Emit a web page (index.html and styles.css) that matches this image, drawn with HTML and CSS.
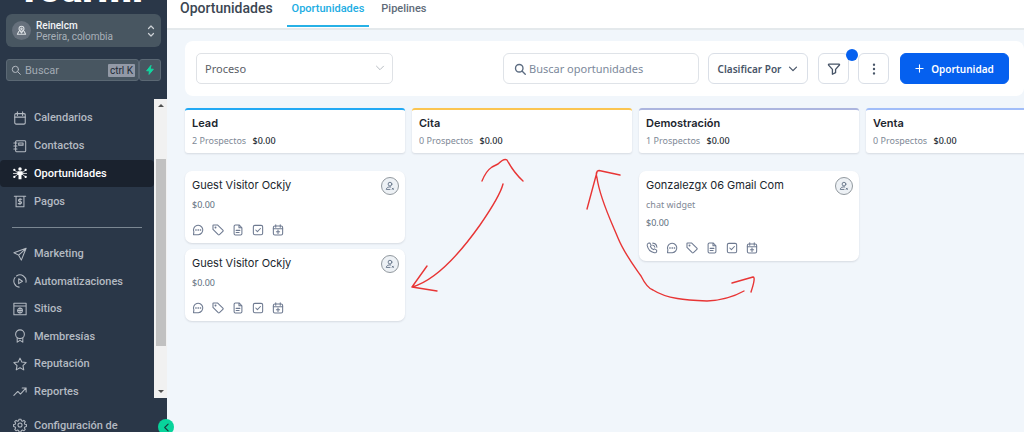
FILE: index.html
```html
<!DOCTYPE html>
<html lang="es">
<head>
<meta charset="utf-8">
<title>Oportunidades</title>
<link rel="stylesheet" href="styles.css">
</head>
<body>
<svg class="sprite" aria-hidden="true">
  <symbol id="i-pin" viewBox="0 0 16 16"><circle cx="8" cy="5.5" r="3.6"/><circle cx="8" cy="5.5" r="1"/><path d="M5.5 8.2 8 11.5l2.500-3.300M4 9.500 2 13.500h12l-2-4"/></symbol>
  <symbol id="i-search" viewBox="0 0 16 16"><circle cx="7" cy="7" r="5"/><path d="m11 11 4 4"/></symbol>
  <symbol id="i-updown" viewBox="0 0 8 14"><path d="m1.500 4.500 2.500-2.500 2.500 2.500M1.500 9.500 4 12l2.500-2.500"/></symbol>
  <symbol id="i-bolt" viewBox="0 0 10 12"><path d="M6 .5.8 7h3.400L3.800 11.500 9.200 5H5.700z"/></symbol>
  <symbol id="i-calendar" viewBox="0 0 16 16"><rect x="2" y="3" width="12" height="12" rx="1.500"/><path d="M2 7h12M5 1v4M11 1v4"/></symbol>
  <symbol id="i-contacts" viewBox="0 0 16 16"><rect x="3" y="2" width="11.500" height="12.500" rx="1"/><rect x="6.500" y="4.500" width="5" height="2.500"/><path d="M1 4.500h3.500M1 8h3.500M1 11.500h3.500"/></symbol>
  <symbol id="i-opps" viewBox="0 0 16 16"><g fill="currentColor" stroke="none"><circle cx="8" cy="3.300" r="2"/><path d="M5 6h6v3.500l-1.300 1V15H6.300v-4.500L5 9.500z"/><circle cx="1.500" cy="4.500" r="1.300"/><circle cx="14.500" cy="4.500" r="1.300"/><circle cx="1.500" cy="12.500" r="1.300"/><circle cx="14.500" cy="12.500" r="1.300"/></g><path d="M1.500 4.500 5 7.500M14.500 4.500 11 7.500M.5 8.500H5M11 8.500h4.500M1.500 12.500 5.500 9.500M14.500 12.500 10.500 9.500" stroke-width=".9"/></symbol>
  <symbol id="i-pay" viewBox="0 0 16 16"><path d="M1.500 2.500h13M3.500 2.500v12h9v-12M10 6H7.500C5.800 6 5.800 8.500 7.500 8.500h1c1.700 0 1.700 2.500 0 2.500H6M8 5v7"/></symbol>
  <symbol id="i-send" viewBox="0 0 16 16"><path d="M15 1.500 1 6.500l5.500 2.800L9.500 15zM15 1.500 6.500 9.300"/></symbol>
  <symbol id="i-auto" viewBox="0 0 16 16"><path d="M14.800 9.500A7 7 0 0 0 4 2.300M2.300 4A7 7 0 0 0 7 15M6.500 5.500v5.500l4.300-2.750z"/></symbol>
  <symbol id="i-site" viewBox="0 0 16 16"><path d="M1 1.500h14v13H1zM1 4.500h14"/><circle cx="8" cy="9.700" r="2.700"/><path d="M5.500 9.700h5M8 7v5.400"/></symbol>
  <symbol id="i-award" viewBox="0 0 16 16"><circle cx="8" cy="6" r="5"/><path d="M4.800 10v5l3.200-2 3.200 2v-5"/></symbol>
  <symbol id="i-star" viewBox="0 0 16 16"><path d="m8 1.300 2.100 4.500 4.900.6-3.600 3.400.9 4.900L8 12.300l-4.300 2.400.9-4.900L1 6.400l4.900-.6z"/></symbol>
  <symbol id="i-trend" viewBox="0 0 16 16"><path d="m1 13 4.500-4.500 3 3L15 4.500M10.500 4.500H15V9"/></symbol>
  <symbol id="i-gear" viewBox="0 0 24 24"><circle cx="12" cy="12" r="3.500"/><path d="M10.300 2h3.400l.6 2.700 1.900.8 2.400-1.500 2.400 2.400-1.500 2.400.8 1.900 2.700.6v3.400l-2.700.6-.8 1.900 1.500 2.400-2.400 2.400-2.400-1.500-1.900.8-.6 2.700h-3.400l-.6-2.700-1.900-.8L5.400 22 3 19.600l1.500-2.400-.8-1.900L1 14.700v-3.400l2.700-.6.8-1.900L3 6.400 5.400 4l2.400 1.500 1.900-.8z"/></symbol>
  <symbol id="i-down" viewBox="0 0 10 10"><path d="m1.500 3.200 3.500 3.500 3.500-3.500"/></symbol>
  <symbol id="i-left" viewBox="0 0 10 10"><path d="M6.800 1.200 3 5l3.800 3.800"/></symbol>
  <symbol id="i-filter" viewBox="0 0 16 16"><path d="M2.200 2.500h11.600a.6.600 0 0 1 .4 1L9.800 8.500v3.700l-3.600 1.800V8.500L1.800 3.500a.6.600 0 0 1 .4-1z"/></symbol>
  <symbol id="i-dots" viewBox="0 0 16 16"><g fill="currentColor"><circle cx="8" cy="3" r=".6"/><circle cx="8" cy="8" r=".6"/><circle cx="8" cy="13" r=".6"/></g></symbol>
  <symbol id="i-plus" viewBox="0 0 10 10"><path d="M5 1v8M1 5h8"/></symbol>
  <symbol id="i-user" viewBox="0 0 16 16"><circle cx="8" cy="5" r="3"/><path d="M9 9.500c-4-.4-6.500.8-7 4h6"/><path d="m11.500 11.500 2 2m0-2-2 2"/></symbol>
  <symbol id="i-call" viewBox="0 0 16 16"><path d="M5.800 6c.9 1.800 2.300 3.300 4.200 4.200l1.200-1 3 1.600v2c-.5 1.500-1.700 1.800-3 1.500C6 13.400 2.500 9.500 1.600 4.500c-.2-1.500.3-2.500 1.800-3h2l1.500 3zM9 1.500A6 6 0 0 1 14.500 7M9 4.200A3.200 3.200 0 0 1 11.800 7"/></symbol>
  <symbol id="i-chat" viewBox="0 0 16 16"><path d="M2 14.200h6.500A6.200 6.200 0 1 0 2.500 10.500L2 14.200z"/><path d="M5 8h.6M8 8h.6M11 8h.6" stroke-width="1.700"/></symbol>
  <symbol id="i-tag" viewBox="0 0 16 16"><path d="M1.300 2v5.200l7 7.100q.8.700 1.600 0l4.600-4.600q.8-.8 0-1.600L7.300 1.300H2q-.7 0-.7.700z"/><circle cx="4.700" cy="4.700" r=".6"/></symbol>
  <symbol id="i-doc" viewBox="0 0 16 16"><path d="M9.500 1.300h-5q-1.700 0-1.700 1.700v10q0 1.700 1.700 1.700h7q1.700 0 1.700-1.700V5zM9.300 1.500V5H13M5.500 8.500h5M5.500 11.300h4"/></symbol>
  <symbol id="i-check" viewBox="0 0 16 16"><rect x="1.800" y="1.800" width="12.400" height="12.400" rx="2"/><path d="m5 8 2.200 2.200L11.200 6"/></symbol>
  <symbol id="i-event" viewBox="0 0 16 16"><rect x="1.800" y="2.700" width="12.400" height="12" rx="2"/><path d="M1.800 6.200h12.400M5 1v3.200M11 1v3.200M8 8v4.500M5.800 10.200h4.400"/></symbol>
</svg>

<div class="app">
  <aside class="sidebar">
    <div class="logo">roarmi</div>
    <button class="account" type="button">
      <span class="account-pin"><svg class="icon"><use href="#i-pin"/></svg></span>
      <span class="account-text"><strong>Reinelcm</strong><span>Pereira, colombia</span></span>
      <svg class="icon updown"><use href="#i-updown"/></svg>
    </button>
    <div class="quick">
      <label class="quick-search">
        <svg class="icon"><use href="#i-search"/></svg>
        <input type="text" placeholder="Buscar" aria-label="Buscar">
        <kbd>ctrl K</kbd>
      </label>
      <button class="quick-bolt" type="button" aria-label="Acciones rápidas"><svg class="icon"><use href="#i-bolt"/></svg></button>
    </div>
    <div class="nav-area">
      <nav class="nav">
        <div class="nav-group">
          <a href="#"><svg class="icon"><use href="#i-calendar"/></svg>Calendarios</a>
          <a href="#"><svg class="icon"><use href="#i-contacts"/></svg>Contactos</a>
          <a href="#" class="active"><svg class="icon"><use href="#i-opps"/></svg>Oportunidades</a>
          <a href="#"><svg class="icon"><use href="#i-pay"/></svg>Pagos</a>
        </div>
        <hr>
        <div class="nav-group nav-more">
          <a href="#"><svg class="icon"><use href="#i-send"/></svg>Marketing</a>
          <a href="#"><svg class="icon"><use href="#i-auto"/></svg>Automatizaciones</a>
          <a href="#"><svg class="icon"><use href="#i-site"/></svg>Sitios</a>
          <a href="#"><svg class="icon"><use href="#i-award"/></svg>Membresías</a>
          <a href="#"><svg class="icon"><use href="#i-star"/></svg>Reputación</a>
          <a href="#"><svg class="icon"><use href="#i-trend"/></svg>Reportes</a>
        </div>
      </nav>
      <div class="scrollbar" aria-hidden="true"><i class="arrow-up"></i><i class="thumb"></i><i class="arrow-down"></i></div>
    </div>
    <a href="#" class="settings"><svg class="icon"><use href="#i-gear"/></svg>Configuración de</a>
    <button class="collapse" type="button" aria-label="Contraer menú"><svg class="icon"><use href="#i-left"/></svg></button>
  </aside>

  <main class="main">
    <header class="topbar">
      <h1>Oportunidades</h1>
      <nav class="tabs">
        <a href="#" class="current">Oportunidades</a>
        <a href="#">Pipelines</a>
      </nav>
    </header>

    <section class="toolbar">
      <div class="pipeline">
        <select aria-label="Pipeline"><option>Proceso</option></select>
        <svg class="icon"><use href="#i-down"/></svg>
      </div>
      <label class="search">
        <svg class="icon"><use href="#i-search"/></svg>
        <input type="text" placeholder="Buscar oportunidades" aria-label="Buscar oportunidades">
      </label>
      <button class="btn sort" type="button">Clasificar Por<svg class="icon"><use href="#i-down"/></svg></button>
      <button class="btn square filter" type="button" aria-label="Filtros"><svg class="icon"><use href="#i-filter"/></svg><i class="dot"></i></button>
      <button class="btn square" type="button" aria-label="Más"><svg class="icon"><use href="#i-dots"/></svg></button>
      <button class="btn primary" type="button"><svg class="icon"><use href="#i-plus"/></svg>Oportunidad</button>
    </section>

    <section class="board">
      <div class="column">
        <header class="stage lead"><h2>Lead</h2><p>2 Prospectos <b>$0.00</b></p></header>
        <article class="card">
          <div class="card-top"><h3>Guest Visitor Ockjy</h3><button class="owner" type="button" aria-label="Asignar"><svg class="icon"><use href="#i-user"/></svg></button></div>
          <p class="amount">$0.00</p>
          <div class="actions">
            <svg class="icon"><use href="#i-chat"/></svg><svg class="icon"><use href="#i-tag"/></svg><svg class="icon"><use href="#i-doc"/></svg><svg class="icon"><use href="#i-check"/></svg><svg class="icon"><use href="#i-event"/></svg>
          </div>
        </article>
        <article class="card">
          <div class="card-top"><h3>Guest Visitor Ockjy</h3><button class="owner" type="button" aria-label="Asignar"><svg class="icon"><use href="#i-user"/></svg></button></div>
          <p class="amount">$0.00</p>
          <div class="actions">
            <svg class="icon"><use href="#i-chat"/></svg><svg class="icon"><use href="#i-tag"/></svg><svg class="icon"><use href="#i-doc"/></svg><svg class="icon"><use href="#i-check"/></svg><svg class="icon"><use href="#i-event"/></svg>
          </div>
        </article>
      </div>
      <div class="column">
        <header class="stage cita"><h2>Cita</h2><p>0 Prospectos <b>$0.00</b></p></header>
      </div>
      <div class="column">
        <header class="stage demo"><h2>Demostración</h2><p>1 Prospectos <b>$0.00</b></p></header>
        <article class="card">
          <div class="card-top"><h3>Gonzalezgx 06 Gmail Com</h3><button class="owner" type="button" aria-label="Asignar"><svg class="icon"><use href="#i-user"/></svg></button></div>
          <p class="source">chat widget</p>
          <p class="amount">$0.00</p>
          <div class="actions">
            <svg class="icon"><use href="#i-call"/></svg><svg class="icon"><use href="#i-chat"/></svg><svg class="icon"><use href="#i-tag"/></svg><svg class="icon"><use href="#i-doc"/></svg><svg class="icon"><use href="#i-check"/></svg><svg class="icon"><use href="#i-event"/></svg>
          </div>
        </article>
      </div>
      <div class="column">
        <header class="stage venta"><h2>Venta</h2><p>0 Prospectos <b>$0.00</b></p></header>
      </div>
    </section>
  </main>

  <svg class="marks" width="1024" height="432" viewBox="0 0 1024 432" aria-hidden="true">
    <path d="M482 181Q486 171 492 167L498 164Q504 158 507 160Q514 173 523 181"/>
    <path d="M503 184Q500 196 480 225C458 256 434 281 412 287M427 266 412 287 437 291"/>
    <path d="M587 209 597 172M620 175 599 170.500Q595 171 597 178C600 199 611 221 618 238S637 270 641 276Q647 288 653 290C667 299 686 300 707 301Q728 300 744 291M732 283 753 277Q756 277 751 292"/>
  </svg>
</div>
</body>
</html>
```

FILE: styles.css
```css
* { box-sizing: border-box; }
body, h1, h2, h3, p { margin: 0; }
body { font-family: Roboto, "Liberation Sans", sans-serif; font-size: 12px; overflow: hidden; background: #f1f6fb; }
a { color: inherit; text-decoration: none; }
button, input, select { font: inherit; color: inherit; margin: 0; padding: 0; border: 0; background: none; }
button { cursor: pointer; }
.sprite { position: absolute; width: 0; height: 0; }
.icon { width: 14px; height: 14px; flex: none; fill: none; stroke: currentColor; stroke-width: 1.2; stroke-linecap: round; stroke-linejoin: round; }
.app { position: relative; display: flex; height: 100vh; }

.sidebar { position: relative; flex: none; width: 167px; height: 100vh; background: #2a3748; color: #b4bac2; display: flex; flex-direction: column; }
.sidebar > * { flex-shrink: 0; }
.logo { height: 2px; margin: 0 24px 12px; display: flex; align-items: flex-end; justify-content: center; overflow: hidden; color: #fff; font-size: 40px; font-weight: 900; line-height: 26px; }
.account { display: flex; align-items: center; gap: 5px; height: 33px; margin: 0 6px 12px; padding: 0 6px; border-radius: 6px; background: #485661; text-align: left; }
.account-pin { width: 19px; height: 19px; border-radius: 50%; background: #66707c; display: grid; place-items: center; color: #dde1e5; }
.account-pin .icon { width: 11px; height: 11px; stroke-width: 1.5; }
.account-text { flex: 1; display: grid; padding-top: 1px; font-size: 10px; line-height: 11px; color: #a9b1b9; }
.account-text strong { color: #f2f4f6; font-weight: 500; }
.updown { width: 8px; height: 14px; color: #cdd2d7; }
.quick { display: flex; height: 22px; margin: 0 6px 18px; }
.quick-search { flex: 1; min-width: 0; display: flex; align-items: center; gap: 4px; padding: 0 3px 0 4px; border: 1px solid #5b6874; border-radius: 3px; background: #485661; }
.quick-search .icon { width: 10px; height: 10px; stroke-width: 1.6; }
.quick-search input { flex: 1; min-width: 0; font-size: 11px; outline: 0; }
.quick-search input::placeholder { color: #a3abb4; opacity: 1; }
.quick-search kbd { padding: 0 2px; border-radius: 1px; background: #9299a6; color: #202a37; font: 10px/13px Roboto, sans-serif; }
.quick-bolt { width: 22px; display: grid; place-items: center; border: 1px solid #5b6874; border-radius: 3px; background: #485661; color: #11d6a0; }
.quick-bolt .icon { width: 8px; height: 10px; fill: currentColor; }
.nav-area { display: flex; height: 299px; }
.nav { flex: 1; min-width: 0; padding-top: 5px; }
.nav-group { display: grid; grid-template-rows: repeat(4, 1fr); height: 111px; }
.nav-more { grid-template-rows: repeat(6, 1fr); height: 165px; }
.nav a, .settings { display: flex; align-items: center; gap: 7px; padding-left: 13px; font-size: 11px; font-weight: 500; }
.nav a.active { background: #1a222e; color: #fff; border-radius: 4px; }
.nav hr { height: 1px; margin: 12px; border: 0; background: #7b8792; }
.scrollbar { width: 13px; background: #f1f1f1; display: flex; flex-direction: column; align-items: center; padding: 5px 0; }
.scrollbar .arrow-up { border: 3px solid transparent; border-top: 0; border-bottom-color: #505050; }
.scrollbar .arrow-down { margin-top: auto; border: 3px solid transparent; border-bottom: 0; border-top-color: #505050; }
.scrollbar .thumb { width: 10px; height: 187px; margin-top: 52px; background: #c1c1c1; }
.settings { margin-top: 19px; height: 16px; white-space: nowrap; }
.settings .icon { stroke-width: 1.8; }
.collapse { position: absolute; right: -7px; bottom: -3px; width: 16px; height: 16px; border-radius: 50%; display: grid; place-items: center; background: #08d49b; color: #173a3b; z-index: 2; }
.collapse .icon { width: 9px; height: 9px; }

.main { flex: 1; min-width: 0; overflow: hidden; color: #344054; }
.topbar { display: flex; gap: 14px; height: 30px; padding-left: 13px; background: #fff; border-bottom: 2px solid #e4e9ec; color: #3b4652; }
.topbar h1 { font-size: 14px; font-weight: 500; line-height: 16px; }
.tabs { display: flex; gap: 7px; font-weight: 500; font-size: 11px; line-height: 18px; color: #606b78; }
.tabs a { height: 27px; padding: 0 5px; }
.tabs a.current { color: #21ade3; border-bottom: 2px solid #27b1e6; }
.toolbar { display: flex; align-items: center; height: 55px; margin: 11px 0 12px 18px; padding: 0 15px 0 11px; border-radius: 8px; background: #fff; font-family: "Noto Sans", sans-serif; }
.pipeline { position: relative; width: 197px; margin-right: auto; }
.pipeline select { appearance: none; display: block; width: 100%; height: 31px; padding: 0 8px; border: 1px solid #dfe2e6; border-radius: 5px; background: #fff; color: #5b6067; font-size: 11px; }
.pipeline .icon { position: absolute; right: 8px; top: 10px; width: 10px; height: 10px; stroke-width: 1; color: #b8bdc3; pointer-events: none; }
.search { display: flex; align-items: center; gap: 3px; width: 196px; height: 31px; margin-right: 9px; padding: 0 10px; border: 1px solid #dfe3e8; border-radius: 6px; }
.search .icon { width: 12px; height: 12px; stroke-width: 1.8; color: #5b6b80; }
.search input { flex: 1; min-width: 0; font-size: 11px; outline: 0; }
.search input::placeholder { color: #7c899b; opacity: 1; }
.btn { display: flex; align-items: center; justify-content: center; gap: 7px; height: 31px; border: 1px solid #dadfe7; border-radius: 6px; font-size: 10px; font-weight: 600; color: #475467; }
.sort { width: 100px; margin-right: 10px; }
.sort .icon { width: 10px; height: 10px; }
.square { position: relative; width: 31px; }
.filter { margin-right: 9px; }
.square .icon { stroke-width: 1.5; }
.dot { position: absolute; right: -10px; top: -5px; width: 12px; height: 12px; border-radius: 50%; background: #0560ef; }
.primary { width: 109px; margin-left: 11px; background: #0560ef; border-color: #0560ef; color: #fff; }
.primary .icon { width: 9px; height: 9px; }

.board { display: flex; gap: 7px; padding-left: 18px; }
.column { flex: none; width: 220px; }
.stage { height: 45px; margin-bottom: 18px; padding: 7px 7px 0; border-top: 2px solid; border-radius: 3px; background: #fff; box-shadow: 0 1px 2px #1018281f; }
.lead { border-top-color: #22a9f4; }
.cita { border-top-color: #fbc551; }
.demo { border-top-color: #acb5df; }
.venta { border-top-color: #a1bdf9; }
.stage h2 { font: 600 11px/13px Inter, sans-serif; color: #1c252e; }
.stage p { margin-top: 4px; font: 9px/13px "Noto Sans", sans-serif; color: #7f8a97; }
.stage b { margin-left: 4px; font-weight: 500; color: #252c34; }
.card { margin-bottom: 6px; padding: 6px 6px 7px 7px; border-radius: 7px; background: #fff; box-shadow: 0 1px 2px #1018281f; }
.card-top { display: flex; justify-content: space-between; }
.card h3 { font: 400 11px/16px Inter, sans-serif; color: #20262d; }
.owner { width: 18px; height: 18px; border: 1px solid #92999f; border-radius: 50%; background: #edf1f5; display: grid; place-items: center; color: #66758a; }
.owner .icon { width: 10px; height: 10px; stroke-width: 1.5; }
.card p { font: 9px/12px "Noto Sans", sans-serif; color: #607080; margin-top: 4px; }
.card .source { color: #7f8996; }
.card .source + .amount { margin-top: 6px; }
.actions { display: flex; gap: 8px; margin-top: 13px; color: #6d7990; }
.actions .icon { width: 12px; height: 12px; stroke-width: 1.4; }
.marks { position: absolute; left: 0; top: 0; pointer-events: none; fill: none; stroke: #e83535; stroke-width: 1.4; stroke-linecap: round; stroke-linejoin: round; }
```
